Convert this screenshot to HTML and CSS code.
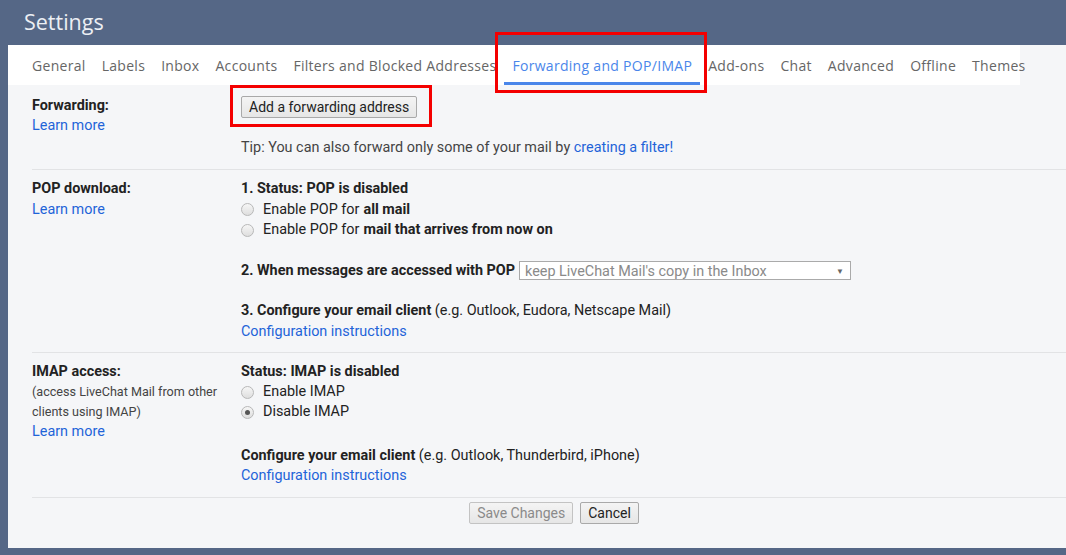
FILE: index.html
```html
<!DOCTYPE html>
<html lang="en">
<head>
  <meta charset="UTF-8" />
  <title>Settings</title>
  <link rel="stylesheet" href="styles.css">
</head>
<body>

  <div class="header">Settings</div>

  <div class="panel">
    <div class="tabs">
      <div class="tab">General</div>
      <div class="tab">Labels</div>
      <div class="tab">Inbox</div>
      <div class="tab">Accounts</div>
      <div class="tab">Filters and Blocked Addresses</div>
      <div class="tab active">Forwarding and POP/IMAP<span class="mark mark-tab"></span></div>
      <div class="tab">Add-ons</div>
      <div class="tab">Chat</div>
      <div class="tab">Advanced</div>
      <div class="tab">Offline</div>
      <div class="tab">Themes</div>
    </div>

    <div class="content">
      <!-- Forwarding -->
      <div class="row row-forward">
        <div class="label">
          <div class="title">Forwarding:</div>
          <a class="link">Learn more</a>
        </div>
        <div class="value">
          <div class="btn-wrap">
            <button class="btn">Add a forwarding address</button>
            <span class="mark mark-btn"></span>
          </div>
          <div class="tip">Tip: You can also forward only some of your mail by <a class="link">creating a filter!</a></div>
        </div>
      </div>

      <!-- POP -->
      <div class="row row-pop">
        <div class="label">
          <div class="title">POP download:</div>
          <a class="link">Learn more</a>
        </div>
        <div class="value">
          <div class="title">1. Status: POP is disabled</div>
          <label class="radio"><span class="dot"></span>Enable POP for <b>all mail</b></label>
          <label class="radio"><span class="dot"></span>Enable POP for <b>mail that arrives from now on</b></label>

          <div class="gap select-line">
            <b>2. When messages are accessed with POP</b>
            <div class="select">keep LiveChat Mail's copy in the Inbox<span class="arrow">&#9660;</span></div>
          </div>

          <div class="gap"><b>3. Configure your email client</b> (e.g. Outlook, Eudora, Netscape Mail)</div>
          <a class="link">Configuration instructions</a>
        </div>
      </div>

      <!-- IMAP -->
      <div class="row row-imap">
        <div class="label">
          <div class="title">IMAP access:</div>
          <div class="note">(access LiveChat Mail from other clients using IMAP)</div>
          <a class="link">Learn more</a>
        </div>
        <div class="value">
          <div class="title">Status: IMAP is disabled</div>
          <label class="radio"><span class="dot"></span>Enable IMAP</label>
          <label class="radio"><span class="dot checked"></span>Disable IMAP</label>

          <div class="gap-more"><b>Configure your email client</b> (e.g. Outlook, Thunderbird, iPhone)</div>
          <a class="link">Configuration instructions</a>
        </div>
      </div>

      <div class="actions">
        <button class="btn disabled">Save Changes</button>
        <button class="btn">Cancel</button>
      </div>
    </div>
  </div>

</body>
</html>
```

FILE: styles.css
```css
body {
    margin: 0;
    height: 555px;
    background-color: #556786;
    font-family: Roboto, 'Liberation Sans', Arial, sans-serif;
    font-size: 14.4px;
    color: #222;
    overflow: hidden;
}

/* Header */
.header {
    height: 45px;
    padding-left: 24px;
    box-sizing: border-box;
    padding-top: 7px;
    font-family: 'Open Sans', Roboto, sans-serif;
    font-size: 21.5px;
    color: #eceff4;
}

/* White/grey panel */
.panel {
    margin-left: 8px;
    height: 503px;
    background-color: #f5f6f8;
}

/* Tabs */
.tabs {
    display: flex;
    height: 40px;
    padding-left: 16px;
    background-color: #fff;
    margin-right: 46px;
}

.tab {
    position: relative;
    padding: 1px 8px 0;
    line-height: 40px;
    font-family: 'Open Sans', Roboto, sans-serif;
    font-size: 14px;
    letter-spacing: 0.3px;
    color: #666;
    box-sizing: border-box;
    white-space: nowrap;
}

.tab.active {
    color: #4a86ea;
    border-bottom: 3px solid #4a86ea;
    height: 40px;
}

/* Red highlight boxes */
.mark {
    position: absolute;
    border: 3px solid #f40000;
    pointer-events: none;
}

.mark-tab {
    left: -9px;
    right: -7px;
    top: -13px;
    bottom: -11px;
}

.mark-btn {
    left: -11px;
    right: -15px;
    top: -11px;
    bottom: -9px;
}

/* Content rows */
.content {
    padding-left: 24px;
}

.row {
    display: flex;
    border-bottom: 1px solid #e2e3e5;
    line-height: 20px;
}

.row-forward {
    padding: 11px 0 11px;
}

.row-pop {
    padding: 9px 0 10px;
    line-height: 20.5px;
}

.row-imap {
    padding: 9px 0 11px;
}

.label {
    width: 209px;
    flex-shrink: 0;
}

.title {
    font-weight: bold;
    color: #222;
}

.note {
    font-size: 12.6px;
    color: #444;
    width: 200px;
}

.value {
    flex: 1;
}

.link {
    color: #1f64d8;
    display: block;
}

.tip .link {
    display: inline;
}

.tip {
    color: #444;
    margin-top: 20px;
}

.gap {
    margin-top: 20px;
}

.gap-more {
    margin-top: 24px;
}

/* Buttons */
.btn-wrap {
    position: relative;
    display: inline-block;
}

.btn {
    font-family: Roboto, 'Liberation Sans', Arial, sans-serif;
    font-size: 14px;
    height: 22px;
    padding: 0 7px;
    color: #222;
    background: linear-gradient(to bottom, #f4f4f4, #e6e6e6);
    border: 1px solid #a9a9a9;
    border-radius: 2px;
    display: block;
}

.btn.disabled {
    color: #8a8a8a;
    border-color: #c3c3c3;
}

/* Radios */
.radio {
    display: flex;
    align-items: center;
    color: #222;
}

.radio b {
    margin-left: 4px;
}

.dot {
    width: 11px;
    height: 11px;
    border: 1px solid #b8b8b8;
    border-radius: 50%;
    background: linear-gradient(to bottom, #f6f6f6, #dedede);
    margin-right: 9px;
    position: relative;
}

.dot.checked::after {
    content: "";
    position: absolute;
    left: 3px;
    top: 3px;
    width: 5px;
    height: 5px;
    border-radius: 50%;
    background-color: #555;
}

/* Select */
.select-line {
    display: flex;
    align-items: center;
}

.select {
    position: relative;
    margin-left: 4px;
    width: 332px;
    height: 19px;
    line-height: 19px;
    border: 1px solid #aaa;
    background-color: #fff;
    color: #8a8a8a;
    padding-left: 5px;
    box-sizing: border-box;
}

.arrow {
    position: absolute;
    right: 6px;
    top: 0;
    font-size: 8px;
    color: #666;
}

.actions {
    display: flex;
    justify-content: center;
    gap: 7px;
    padding: 4px 0 0 10px;
}
```
